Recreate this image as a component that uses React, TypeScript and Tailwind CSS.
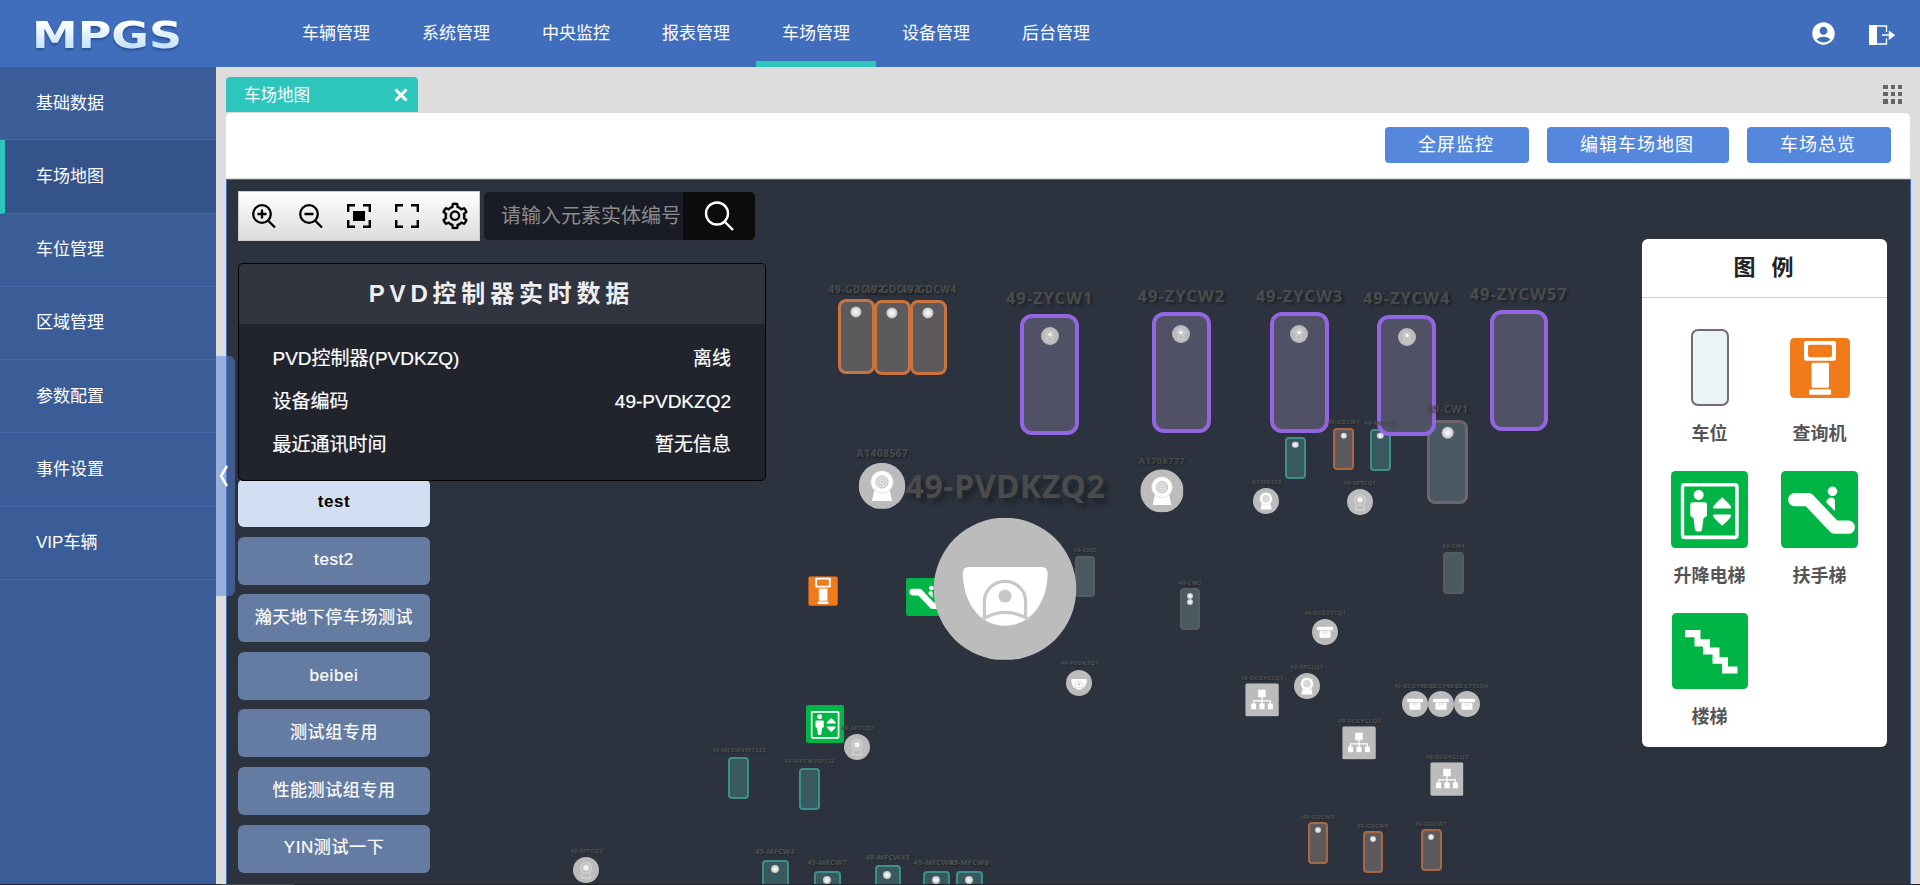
import React from "react";
import { MdAccountCircle } from "react-icons/md";
import { AiOutlineSetting } from "react-icons/ai";

const NAV = ["车辆管理", "系统管理", "中央监控", "报表管理", "车场管理", "设备管理", "后台管理"];
const SIDE = ["基础数据", "车场地图", "车位管理", "区域管理", "参数配置", "事件设置", "VIP车辆"];
const FLOORS = ["test", "test2", "瀚天地下停车场测试", "beibei", "测试组专用", "性能测试组专用", "YIN测试一下"];
const INFO = [
  ["PVD控制器(PVDKZQ)", "离线"],
  ["设备编码", "49-PVDKZQ2"],
  ["最近通讯时间", "暂无信息"],
];

type Kind = "purple" | "orange" | "orangeSm" | "teal" | "grey" | "greySm";

const SPACE: Record<Kind, string> = {
  purple: "border-4 border-[#9365e2] bg-[#535367]/95 rounded-[12px]",
  orange: "border-[3px] border-[#c9743f] bg-[#5c5a5c] rounded-[8px]",
  orangeSm: "border-2 border-[#a96841] bg-[#5c5a5c] rounded-[4px]",
  teal: "border-2 border-[#3d8f8a] bg-[#37595f] rounded-[4px]",
  grey: "border-[3px] border-[#6c6669] bg-[#4a5a62] rounded-[8px]",
  greySm: "border-2 border-[#595b61] bg-[#4a5a62] rounded-[4px]",
};

/* Parking spaces: kind, x, y, width, height */
const SPACES: [Kind, number, number, number, number][] = [
  ["grey", 1427, 419.5, 41, 84],
  ["teal", 1285, 437, 21, 42],
  ["orangeSm", 1333, 428, 21, 42],
  ["teal", 1370, 428.5, 21, 42],
  ["orange", 838, 299, 37, 74.5],
  ["orange", 874, 300, 37, 74.5],
  ["orange", 910, 300, 36.5, 74.5],
  ["greySm", 1075, 556, 20, 41],
  ["greySm", 1180, 588, 20, 41.5],
  ["greySm", 1443, 552, 20.5, 41.5],
  ["teal", 799, 768, 21, 41.5],
  ["teal", 728, 757, 21, 41.5],
  ["teal", 762, 859.5, 26.5, 53],
  ["teal", 814, 870.5, 26.5, 53],
  ["teal", 874.5, 865, 26.5, 53],
  ["teal", 923, 870.5, 26.5, 53],
  ["teal", 956, 870.5, 26.5, 53],
  ["orangeSm", 1307.5, 822, 20.5, 41.5],
  ["orangeSm", 1362.5, 831, 20.5, 41.5],
  ["orangeSm", 1421, 829, 20.5, 41.5],
];
const PURPLE: [Kind, number, number, number, number][] = [
  ["purple", 1020, 314, 59, 121],
  ["purple", 1152, 312, 59, 121],
  ["purple", 1270, 312, 58.5, 121],
  ["purple", 1377, 315, 58.5, 120.5],
  ["purple", 1489.5, 310, 58.5, 121],
];

/* Detector lamps: centre x, centre y, radius */
const DOTS: [number, number, number][] = [
  [856.3, 312.3, 5.6], [892.3, 313, 5.6], [928, 313, 5.6],
  [1447.5, 432.5, 6.3], [1295.3, 444.5, 3.2], [1343.5, 435.5, 3.2], [1380.3, 436, 3.2],
  [1190, 595.5, 3], [1190, 602, 3],
  [775, 869, 4], [826.8, 880, 4], [887.3, 875, 4], [935.5, 880, 4], [969, 880, 4],
  [1317.7, 829.5, 3], [1372.5, 838.5, 3], [1431, 836.5, 3],
];

/* Labels: text, centre x, centre y, font size */
const LOW_LABELS: [string, number, number, number][] = [["49-MFCW1", 1296, 431, 6]];
const LABELS: [string, number, number, number][] = [
  ["49-CW1", 1447.7, 409, 10.5],
  ["49-GDCW2", 856.5, 289, 10], ["49-GDCW3", 892.5, 289, 10], ["49-GDCW4", 929, 289, 10],
  ["49-ZYCW1", 1049.7, 298, 16.5], ["49-ZYCW2", 1181.3, 296, 16.5], ["49-ZYCW3", 1299.5, 296, 16.5],
  ["49-ZYCW4", 1406.7, 298, 16.5], ["49-ZYCW57", 1518.7, 294, 16.5],
  ["49-GDCW1", 1343.5, 422, 6], ["49-MFCW2", 1380.5, 422.5, 6],
  ["A1308333", 1266.5, 482, 6], ["49-SPTCQ1", 1359.7, 483, 6],
  ["A1408567", 882.5, 452.5, 10], ["A1708777", 1162, 460, 9],
  ["49-CW2", 1084.7, 550, 6], ["49-PVDKZQ1", 1079.5, 663, 6], ["49-SPTCQ2", 857.5, 727.5, 6],
  ["49-MFCWVIP122", 809.5, 761, 6], ["49-MFCWVIP1222", 739, 750, 6], ["49-SPTCQ3", 586.5, 851, 6],
  ["49-MFCW3", 775, 852, 7.4], ["49-MFCW7", 827, 863, 7.4], ["49-MFCW43", 887.5, 858, 7.4],
  ["49-MFCW83", 935.5, 863, 7.4], ["49-MFCW6", 969, 863, 7.4],
  ["49-CW3", 1190, 582.5, 6], ["49-CW4", 1453.5, 546, 6], ["49-DCGYTCQ1", 1325, 613, 6],
  ["49-SPGLQ1", 1306.7, 666.5, 6], ["49-DCGYGLQ1", 1262, 677.5, 6], ["49-DCGYGLQ3", 1359.5, 720.5, 6],
  ["49-DCGYGLQ2", 1447, 756.5, 6], ["49-DCGYTCQ2", 1415, 685.5, 6], ["49-DCGYTCQ3", 1441, 685.5, 6],
  ["49-DCGYTCQ4", 1467, 685.5, 6], ["49-GDCW5", 1318, 817, 6], ["49-GDCW6", 1372.7, 826, 6],
  ["49-GDCW7", 1431, 824, 6],
];

function Camera({ dim = false }: { dim?: boolean }) {
  return (
    <svg viewBox="0 0 48 48" className="size-full">
      <circle cx="24" cy="24" r="24" fill="#bcbcbc" />
      {dim ? (
        <g fill="none" stroke="#d6d6d6" strokeWidth="2">
          <circle cx="24" cy="20" r="10" />
          <path d="M17 29 15.500 38.500H32.500L31 29" />
          <circle cx="24" cy="20" r="5.500" fill="#f2f2f2" />
        </g>
      ) : (
        <g>
          <path d="M16.300 27h15.400l2.600 12.500H13.700z" fill="#fff" />
          <circle cx="24" cy="19.800" r="11.600" fill="#fff" stroke="#d0d0d0" strokeWidth=".7" />
          <circle cx="24" cy="19.800" r="6.800" fill="#e2e2e2" />
          <circle cx="24" cy="19.800" r="6.200" fill="none" stroke="#b8b8b8" strokeWidth=".8" />
          <circle cx="24" cy="19.800" r="3.500" fill="none" stroke="#c2c2c2" strokeWidth=".8" />
          <circle cx="24" cy="19.800" r=".8" fill="#aaa" />
        </g>
      )}
    </svg>
  );
}

function Dome() {
  return (
    <svg viewBox="0 0 142 142" className="size-full">
      <circle cx="71" cy="71" r="71" fill="#bcbcbc" />
      <path d="M35 49H107.500Q113.500 49 113.500 55C113.500 82 98 107.500 71 107.500S29 82 29 55Q29 49 35 49Z" fill="#fff" />
      <path d="M50.500 101V83a20.500 19.500 0 0 1 41 0V101M48 101.500Q71 87 95 101.500" fill="none" stroke="#c8c8c8" strokeWidth="3.200" />
      <circle cx="71" cy="78" r="6.500" fill="#c8c8c8" />
    </svg>
  );
}

function Detector() {
  return (
    <svg viewBox="0 0 26 26" className="size-full">
      <circle cx="13" cy="13" r="13" fill="#bcbcbc" />
      <rect x="5" y="7.700" width="16" height="3.600" rx="1" fill="#fff" />
      <rect x="7.500" y="11.800" width="11" height="7" rx="1" fill="#fff" />
      <path d="M11.500 12v2.500M13.200 12v3.500M14.900 12v2" stroke="#ccc" strokeWidth=".6" />
    </svg>
  );
}

function Network() {
  return (
    <svg viewBox="0 0 33 33" className="size-full">
      <rect width="33" height="33" rx="2" fill="#bcbcbc" />
      <path d="M16.500 13v8M8.200 21v-3.700h16.600V21" fill="none" stroke="#fff" strokeWidth="1.200" />
      <path d="M12.800 6.500h7.400v7.200h-7.400zM5.800 20h4.900v5.600H5.800zM14 20h5v5.600h-5zM22.300 20h4.900v5.600h-4.900z" fill="#fff" />
    </svg>
  );
}

function Kiosk() {
  return (
    <svg viewBox="0 0 60 58" preserveAspectRatio="none" className="size-full">
      <rect width="60" height="58" rx="4.500" fill="#f17a1b" />
      <path fillRule="evenodd" d="M16 3h28q2 0 2 2v15q0 2-2 2H16q-2 0-2-2V5q0-2 2-2ZM20 6.500q-2 0-2 2v8q0 2 2 2h20q2 0 2-2v-8q0-2-2-2Z" fill="#fff" />
      <rect x="21.500" y="24" width="17.500" height="24" rx="1.500" fill="#fff" />
      <rect x="19" y="49.500" width="22" height="5.300" rx="1.500" fill="#fff" />
    </svg>
  );
}

function Elevator() {
  return (
    <svg viewBox="0 0 77 74" preserveAspectRatio="none" className="size-full">
      <rect width="77" height="74" rx="4.500" fill="#00b545" />
      <rect x="11.500" y="13.300" width="54.500" height="50.500" rx="2" fill="none" stroke="#fff" strokeWidth="3.400" />
      <ellipse cx="27.700" cy="23" rx="5" ry="4.800" fill="#fff" />
      <path d="M21.500 30h12.500q2 0 2 2v11l-3.500 2.500-1.500 11q-.300 1.700-2 1.700h-3q-1.700 0-2-1.700l-1.500-11L19.300 43V32q0-2 2.200-2Z" fill="#fff" />
      <path d="M51.200 25.200q9 8 9 9.800-.200 1-1 1H43q-1 0-1-1 0-1.800 9.200-9.800ZM51.200 52.700q9-8 9-9.800-.200-1-1-1H43q-1 0-1 1 0 1.800 9.200 9.800Z" fill="#fff" />
    </svg>
  );
}

function Escalator() {
  return (
    <svg viewBox="0 0 77 74" preserveAspectRatio="none" className="size-full">
      <rect width="77" height="74" rx="4.500" fill="#00b545" />
      <path d="M13.500 27.500H27.500L53.500 54H67.500" fill="none" stroke="#fff" strokeWidth="12.800" strokeLinecap="round" strokeLinejoin="round" />
      <ellipse cx="51.500" cy="19.500" rx="4.800" ry="4.600" fill="#fff" />
      <path d="M45 30q1.500-4.500 5.500-4.500 3.500.500 3.500 4V38.500Z" fill="#fff" />
    </svg>
  );
}

function Stairs() {
  return (
    <svg viewBox="0 0 76 74" preserveAspectRatio="none" className="size-full">
      <rect width="76" height="74" rx="4.500" fill="#00b545" />
      <path d="M13 16.500H28.500V25.500H38V33.500H47.500V43H56V52H65.500V59H50V49.500H40.500V40.500H31V32.500H22.500V23.500H13Z" fill="#fff" />
    </svg>
  );
}

type IconName = "camera" | "dim" | "dome" | "detector" | "network" | "kiosk" | "elevator" | "escalator";
const ICONS: Record<IconName, React.ReactNode> = {
  camera: <Camera />,
  dim: <Camera dim />,
  dome: <Dome />,
  detector: <Detector />,
  network: <Network />,
  kiosk: <Kiosk />,
  elevator: <Elevator />,
  escalator: <Escalator />,
};

/* Devices: icon, centre x, centre y, size */
const DEVICES: [IconName, number, number, number][] = [
  ["dim", 1049.7, 336, 18], ["dim", 1181.3, 334, 18], ["dim", 1299.3, 334, 18], ["dim", 1406.5, 336.5, 18],
  ["camera", 882.3, 485.7, 46.6], ["camera", 1162, 491, 43.4],
  ["camera", 1266.3, 501, 26], ["dim", 1359.5, 502, 26],
  ["kiosk", 823.3, 591.3, 29.5], ["escalator", 925, 597, 38], ["elevator", 825, 724, 38],
  ["dome", 1005.3, 588.7, 142.5], ["dome", 1079.3, 682.5, 26],
  ["dim", 857.3, 746.5, 26], ["dim", 586.3, 870, 26],
  ["detector", 1325, 632, 26], ["camera", 1306.7, 685.5, 26],
  ["detector", 1415, 704, 26], ["detector", 1441, 704, 26], ["detector", 1466.7, 704, 26],
  ["network", 1262, 699.5, 33.5], ["network", 1359.3, 742.5, 33.5], ["network", 1446.5, 779.2, 33.5],
];

function tone(size: number) {
  if (size > 20) return "tracking-[.018em] text-[#4b4b4b] [text-shadow:.15em_.15em_.15em_rgba(0,0,0,0.35)]";
  if (size > 8) return "tracking-[.06em] text-[#4b4b4b] [text-shadow:.15em_.15em_.15em_rgba(0,0,0,0.35)]";
  return "tracking-[.03em] text-[#505050] [text-shadow:1px_1px_1px_rgba(0,0,0,0.25)]";
}

function Label({ item }: { item: [string, number, number, number] }) {
  const [text, x, y, size] = item;
  return (
    <span
      className={"absolute -translate-x-1/2 -translate-y-1/2 font-bold leading-none whitespace-nowrap " + tone(size)}
      style={{ left: x, top: y, fontSize: size }}
    >
      {text}
    </span>
  );
}

function Space({ item }: { item: [Kind, number, number, number, number] }) {
  const [kind, x, y, w, h] = item;
  return <div className={"absolute " + SPACE[kind]} style={{ left: x, top: y, width: w, height: h }} />;
}

function ParkingMap() {
  return (
    <div className="absolute -left-[227px] -top-[180px] h-[885px] w-[1920px] font-['Noto_Sans',sans-serif]">
      {LOW_LABELS.map((l) => <Label key={l[0]} item={l} />)}
      {SPACES.map((s, i) => <Space key={i} item={s} />)}
      {PURPLE.map((s, i) => <Space key={i} item={s} />)}
      {DOTS.map(([x, y, r], i) => (
        <div
          key={i}
          className="absolute -translate-x-1/2 -translate-y-1/2 rounded-full bg-[radial-gradient(circle,#f4f4f4_20%,#bdbdbd_75%)]"
          style={{ left: x, top: y, width: r * 2, height: r * 2 }}
        />
      ))}
      {DEVICES.map(([icon, x, y, size], i) => (
        <div
          key={i}
          className="absolute -translate-x-1/2 -translate-y-1/2"
          style={{ left: x, top: y, width: size, height: size }}
        >
          {ICONS[icon]}
        </div>
      ))}
      {LABELS.map((l) => <Label key={l[0]} item={l} />)}
      <Label item={["49-PVDKZQ2", 1005.5, 486, 32]} />
    </div>
  );
}

function Toolbar() {
  const corners = "M1.200 8V1.200H8M16 1.200h6.800V8M22.800 16v6.800H16M8 22.800H1.200V16";
  return (
    <div className="flex h-[50px] w-[242px] items-center border border-[#ccc] bg-linear-to-b from-white to-[#dcdcdc] pl-[12px] text-black">
      <svg viewBox="0 0 26 26" className="size-[26px]" fill="none" stroke="currentColor" strokeWidth="2.300">
        <circle cx="11" cy="11" r="8.800" />
        <path d="M17 17.500 24 24.500M11 6.500v9M6.500 11h9" />
      </svg>
      <svg viewBox="0 0 26 26" className="ml-[21px] size-[26px]" fill="none" stroke="currentColor" strokeWidth="2.300">
        <circle cx="11" cy="11" r="8.800" />
        <path d="M17 17.500 24 24.500M6.500 11h9" />
      </svg>
      <svg viewBox="0 0 24 24" className="ml-[23px] size-6" fill="none" stroke="currentColor" strokeWidth="2.400">
        <path d={corners} />
        <rect x="6" y="7" width="12" height="10" fill="currentColor" stroke="none" />
      </svg>
      <svg viewBox="0 0 24 24" className="ml-[24px] size-6" fill="none" stroke="currentColor" strokeWidth="2.400">
        <path d={corners} />
      </svg>
      <AiOutlineSetting className="ml-[21px] size-[30px]" stroke="currentColor" strokeWidth="10" />
    </div>
  );
}

function LegendItem({ label, className, children }: { label: string; className: string; children?: React.ReactNode }) {
  return (
    <div className="flex h-[141.500px] w-[110px] flex-col items-center">
      <div className="flex h-[77px] items-center">
        <div className={className}>{children}</div>
      </div>
      <div className="mt-[14px] text-[18px] leading-[28px] font-bold text-[#555]">{label}</div>
    </div>
  );
}

export default function App() {
  return (
    <div className="flex h-[885px] w-[1920px] flex-col overflow-hidden bg-[#ddd] font-['Liberation_Sans','Noto_Sans_CJK_SC',sans-serif] text-white">
      <header className="flex h-[67px] shrink-0 bg-[#406ebd]">
        <div className="flex w-[276px] items-center pl-[32px]">
          <svg viewBox="0 0 150 36" className="h-9 w-[150px] overflow-visible">
            <defs>
              <linearGradient id="logo" x1="0" y1="0" x2="0" y2="1">
                <stop offset=".2" stopColor="#fff" />
                <stop offset=".85" stopColor="#bfdfff" />
              </linearGradient>
            </defs>
            <text x="0" y="31.500" textLength="150" lengthAdjust="spacingAndGlyphs" fontSize="37" className="font-['DejaVu_Sans',sans-serif] font-bold drop-shadow-[0_2px_1px_rgba(30,60,120,0.6)]" fill="url(#logo)">MPGS</text>
          </svg>
        </div>
        <nav className="flex">
          {NAV.map((n) => (
            <a
              key={n}
              className={
                "flex w-[120px] justify-center border-b-[6px] pt-[21px] text-[17px] leading-[26px] " +
                (n === "车场管理" ? "border-[#2dc6bc]" : "border-transparent")
              }
            >
              {n}
            </a>
          ))}
        </nav>
        <div className="ml-auto flex items-center gap-[32px] pr-[24px]">
          <MdAccountCircle className="size-[27px]" />
          <svg viewBox="0 0 27 20" className="mt-[2px] h-5 w-[27px]">
            <path d="M0 0h8v20H0z" fill="#fff" />
            <path d="M7 1h10.500v6M17.500 13.500V19H7" fill="none" stroke="#fff" strokeWidth="1.300" />
            <path d="M13 10h8" stroke="#fff" strokeWidth="1.500" />
            <path d="M19.800 5.500v9.500l6.500-4.750z" fill="#fff" />
          </svg>
        </div>
      </header>

      <div className="flex h-[817px] shrink-0">
        <aside className="w-[216px] shrink-0 bg-[#3a5d97]">
          {SIDE.map((s, i) => (
            <div
              key={s}
              className={
                "flex h-[73.3px] items-center border-b border-[#4666a8] pt-[.4px] text-[17px] " +
                (i === 1 ? "border-l-[5px] border-l-[#2dc6bc] bg-[#345388] pl-[31px]" : "pl-9")
              }
            >
              {s}
            </div>
          ))}
        </aside>

        <main className="relative flex w-[1704px] flex-col pl-[10px] pr-[9px] pt-[10px]">
          <div className="flex h-[36px] items-start justify-between pr-[9px]">
            <div className="flex h-[35px] w-[192px] items-center justify-between rounded-t-[4px] bg-[#2dc6bc] pl-[18px] pr-[10px] text-[16px]">
              <span className="pt-px text-[16.5px]">车场地图</span>
              <svg viewBox="0 0 14 14" className="size-[14px]" stroke="#fff" strokeWidth="3">
                <path d="M1.500 1.500l11 11M12.500 1.500l-11 11" />
              </svg>
            </div>
            <div className="mt-[8px] grid grid-cols-3 gap-[3px]">
              {Array.from({ length: 9 }, (_, i) => (
                <i key={i} className="size-[4.200px] bg-[#666]" />
              ))}
            </div>
          </div>

          <div className="mr-px flex h-[66px] shrink-0 justify-end gap-[18px] rounded-t-[5px] border-b border-[#ddd] bg-white pr-[19px] pt-[14px]">
            {["全屏监控", "编辑车场地图", "车场总览"].map((b) => (
              <button key={b} className="flex h-[36px] items-center rounded-[4px] bg-[#5588dc] pl-[33px] pr-[35px] text-[18px] tracking-[1px]">
                {b}
              </button>
            ))}
          </div>

          <section className="relative h-[705px] w-[1685px] overflow-hidden border border-b-0 border-[#406ebd] bg-[#2c333e]">
            <ParkingMap />

            <div className="relative flex h-full justify-between">
              <div className="pl-[11px] pt-[11px]">
                <div className="flex items-center gap-1">
                  <Toolbar />
                  <div className="flex h-[48px] w-[271px] overflow-hidden rounded-[5px] bg-[#191c26]">
                    <div className="flex w-[199px] items-center pl-[17px] pb-px text-[20px] whitespace-nowrap text-[#8b8b8b]">请输入元素实体编号</div>
                    <div className="flex flex-1 items-center justify-center bg-[#0c0c0c]">
                      <svg viewBox="0 0 30 30" className="size-[30px]" fill="none" stroke="#fff" strokeWidth="2.400">
                        <circle cx="13" cy="12.500" r="11" />
                        <path d="M20.500 20.500l8.500 8.500" />
                      </svg>
                    </div>
                  </div>
                </div>

                <div className="relative z-10 mt-[22px] h-[218px] w-[528px] overflow-hidden rounded-[5px] border border-black bg-[#21242c]">
                  <h2 className="flex h-[60px] items-center justify-center bg-[#30343f] pr-px text-[24px] font-bold tracking-[.2em] text-[#eee]">
                    PVD控制器实时数据
                  </h2>
                  <div className="flex flex-col pl-[33.500px] pr-[34px] pt-[14px] text-[19px] [-webkit-text-stroke:0.2px_white]">
                    {INFO.map(([k, v]) => (
                      <div key={k} className="flex h-[43px] items-center justify-between">
                        <span>{k}</span>
                        <span>{v}</span>
                      </div>
                    ))}
                  </div>
                </div>

                <div className="-mt-[2px] flex w-[192px] flex-col gap-[9.600px]">
                  {FLOORS.map((f, i) => (
                    <button
                      key={f}
                      className={
                        "flex h-[48px] shrink-0 items-center justify-center rounded-[6px] text-[17px] tracking-[.6px] " +
                        (i === 0
                          ? "bg-[#d2dff3] pb-[2px] font-bold text-black"
                          : "bg-[#647ca1] pb-px [-webkit-text-stroke:0.2px_white]")
                      }
                    >
                      {f}
                    </button>
                  ))}
                </div>
              </div>

              <aside className="mr-[23px] mt-[59px] h-[508px] w-[245px] rounded-[6px] bg-white">
                <h3 className="flex h-[59px] items-center justify-center gap-[16px] border-b border-[#ccc] pr-[2px] pb-px text-[22px] font-bold text-[#222]">
                  <span>图</span>
                  <span>例</span>
                </h3>
                <div className="flex flex-wrap px-[12.500px] pt-[31px]">
                  <LegendItem label="车位" className="h-[77px] w-[38px] rounded-[7px] border-2 border-[#766a6c] bg-[#e9f5f5]" />
                  <LegendItem label="查询机" className="size-[60px]"><Kiosk /></LegendItem>
                  <LegendItem label="升降电梯" className="size-[77px]"><Elevator /></LegendItem>
                  <LegendItem label="扶手梯" className="size-[77px]"><Escalator /></LegendItem>
                  <LegendItem label="楼梯" className="size-[76px]"><Stairs /></LegendItem>
                </div>
              </aside>
            </div>
          </section>

          <div className="absolute left-0 top-[289px] z-20 flex h-[240px] w-[19px] items-center rounded-r-[6px] bg-[#5783db]/50 pl-[3px]">
            <svg viewBox="0 0 9 22" className="h-[22px] w-[9px]" fill="none" stroke="#fff" strokeWidth="2.500">
              <path d="M8 1 2 11l6 10" />
            </svg>
          </div>
        </main>
      </div>
      <div className="h-px shrink-0 bg-[#22252b] pl-[221px]">
        <div className="h-px w-[73px] bg-[#4a4a4a]" />
      </div>
    </div>
  );
}
